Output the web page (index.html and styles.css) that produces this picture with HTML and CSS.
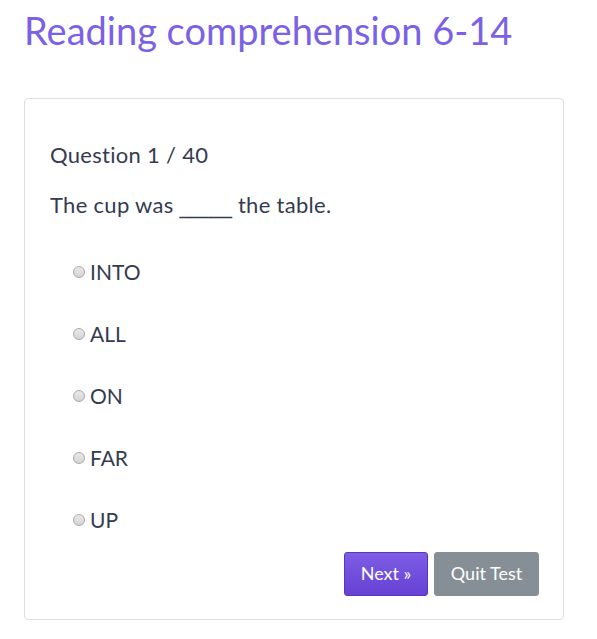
FILE: index.html
```html
<!DOCTYPE html>
<html>
<head>
<meta charset="utf-8">
<link rel="stylesheet" href="styles.css">
</head>
<body>
<div class="page">
  <h1 class="title">Reading comprehension 6-14</h1>
  <div class="card">
    <div class="qnum">Question 1 / 40</div>
    <div class="qtext">The cup was <span class="blank">_____</span> the table.</div>
    <ul class="options">
      <li><span class="radio"></span>INTO</li>
      <li><span class="radio"></span>ALL</li>
      <li><span class="radio"></span>ON</li>
      <li><span class="radio"></span>FAR</li>
      <li><span class="radio"></span>UP</li>
    </ul>
    <div class="actions">
      <button class="btn btn-next">Next »</button>
      <button class="btn btn-quit">Quit Test</button>
    </div>
  </div>
</div>
</body>
</html>
```
FILE: styles.css
```css
* { box-sizing: border-box; }
body {
  margin: 0;
  background: #fff;
  font-family: "Lato", "Open Sans", sans-serif;
  color: #353b4f;
}
.page {
  padding: 8px 33px 0 24px;
}
.title {
  margin: 0 0 46px 0;
  font-weight: 400;
  font-size: 38px;
  line-height: 44px;
  color: #7b61e5;
}
.card {
  border: 1px solid #dedede;
  border-radius: 4px;
  padding: 42px 24px 24px 25px;
  height: 522px;
}
.qnum {
  font-size: 22px;
  line-height: 28px;
  margin-bottom: 22px;
  letter-spacing: 0.3px;
}
.qtext {
  font-size: 22px;
  line-height: 28px;
  height: 28px;
  margin-bottom: 22px;
  letter-spacing: 0.3px;
}
.blank {
  font-family: "DejaVu Sans", sans-serif;
  font-size: 21px;
  line-height: 1;
  letter-spacing: 0;
}
.options {
  list-style: none;
  margin: 0;
  padding: 0 0 0 23px;
}
.options li {
  display: flex;
  align-items: center;
  font-size: 21px;
  line-height: 28px;
  height: 62px;
}
.radio {
  width: 12px;
  height: 12px;
  border-radius: 50%;
  border: 1px solid #a9a9a9;
  background: linear-gradient(#e9e9e9, #d4d4d4);
  margin-right: 5px;
}
.actions {
  display: flex;
  justify-content: flex-end;
  gap: 6px;
  margin-top: 1px;
}
.btn {
  font-family: inherit;
  font-size: 18px;
  color: #fff;
  border-radius: 3px;
  height: 44px;
  padding: 0 14px 2px;
  cursor: pointer;
}
.btn-next {
  width: 84px;
  background: linear-gradient(#7d5de5, #6741d4);
  border: 1px solid #5a36c0;
}
.btn-quit {
  width: 105px;
  background: #868e96;
  border: 1px solid #868e96;
}
```
